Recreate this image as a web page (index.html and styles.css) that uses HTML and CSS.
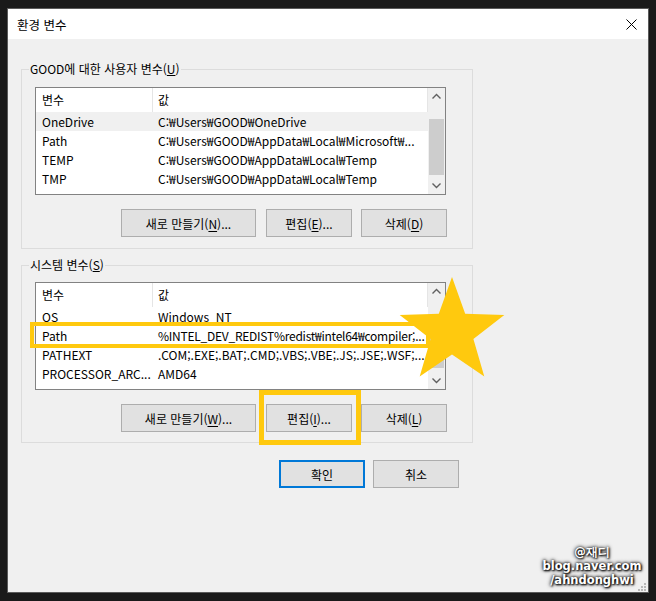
FILE: index.html
```html
<!doctype html>
<html lang="ko">

<head>
    <meta charset="utf-8">
    <title>환경 변수</title>
    <link rel="stylesheet" href="styles.css">
</head>

<body>
    <div class="window">
        <div class="titlebar">
            <span class="title">환경 변수</span>
            <svg class="close" width="11" height="11" viewBox="0 0 11 11">
                <path d="M0.5 0.5 L10.5 10.5 M10.5 0.5 L0.5 10.5" stroke="#000" stroke-width="1" fill="none" />
            </svg>
        </div>

        <div class="content">
            <section class="group">
                <span class="group_label">GOOD에 대한 사용자 변수(<u>U</u>)</span>
                <div class="list">
                    <div class="list_main">
                        <div class="row head"><span class="cell name">변수</span><span class="cell value">값</span></div>
                        <div class="row selected"><span class="cell name">OneDrive</span><span class="cell value">C:₩Users₩GOOD₩OneDrive</span></div>
                        <div class="row"><span class="cell name">Path</span><span class="cell value">C:₩Users₩GOOD₩AppData₩Local₩Microsoft₩...</span></div>
                        <div class="row"><span class="cell name">TEMP</span><span class="cell value">C:₩Users₩GOOD₩AppData₩Local₩Temp</span></div>
                        <div class="row"><span class="cell name">TMP</span><span class="cell value">C:₩Users₩GOOD₩AppData₩Local₩Temp</span></div>
                    </div>
                    <div class="scrollbar">
                        <svg class="arrow" width="17" height="17" viewBox="0 0 17 17"><path d="M4.5 10.5 L8.5 6.5 L12.5 10.5" stroke="#606060" stroke-width="1.4" fill="none" /></svg>
                        <div class="track"><div class="thumb user_thumb"></div></div>
                        <svg class="arrow" width="17" height="17" viewBox="0 0 17 17"><path d="M4.5 6.5 L8.5 10.5 L12.5 6.5" stroke="#606060" stroke-width="1.4" fill="none" /></svg>
                    </div>
                </div>
                <div class="buttons">
                    <button class="btn wide">새로 만들기(<u>N</u>)...</button>
                    <button class="btn">편집(<u>E</u>)...</button>
                    <button class="btn">삭제(<u>D</u>)</button>
                </div>
            </section>

            <section class="group system">
                <span class="group_label">시스템 변수(<u>S</u>)</span>
                <div class="list">
                    <div class="list_main">
                        <div class="row head"><span class="cell name">변수</span><span class="cell value">값</span></div>
                        <div class="row"><span class="cell name">OS</span><span class="cell value">Windows_NT</span></div>
                        <div class="row"><span class="cell name">Path</span><span class="cell value tight">%INTEL_DEV_REDIST%redist₩intel64₩compiler;...</span></div>
                        <div class="row"><span class="cell name">PATHEXT</span><span class="cell value">.COM;.EXE;.BAT;.CMD;.VBS;.VBE;.JS;.JSE;.WSF;...</span></div>
                        <div class="row"><span class="cell name">PROCESSOR_ARC...</span><span class="cell value">AMD64</span></div>
                    </div>
                    <div class="scrollbar">
                        <svg class="arrow" width="17" height="17" viewBox="0 0 17 17"><path d="M4.5 10.5 L8.5 6.5 L12.5 10.5" stroke="#606060" stroke-width="1.4" fill="none" /></svg>
                        <div class="track"><div class="thumb system_thumb"></div></div>
                        <svg class="arrow" width="17" height="17" viewBox="0 0 17 17"><path d="M4.5 6.5 L8.5 10.5 L12.5 6.5" stroke="#606060" stroke-width="1.4" fill="none" /></svg>
                    </div>
                </div>
                <div class="buttons">
                    <button class="btn wide">새로 만들기(<u>W</u>)...</button>
                    <button class="btn">편집(<u>I</u>)...</button>
                    <button class="btn">삭제(<u>L</u>)</button>
                </div>
            </section>

            <div class="dialog_buttons">
                <button class="btn default">확인</button>
                <button class="btn">취소</button>
            </div>
        </div>

        <!-- annotations drawn over the screenshot -->
        <div class="mark mark_path"></div>
        <div class="mark mark_edit"></div>
        <svg class="star" width="110" height="105" viewBox="0 0 110 105">
            <polygon points="55,2 68.2,38.8 107.3,40 76.4,64 87.3,101.5 55,79.5 22.7,101.5 33.6,64 2.7,40 41.8,38.8" fill="#ffc90e" />
        </svg>

        <div class="watermark">
            <div>@재디</div>
            <div>blog.naver.com</div>
            <div>/ahndonghwi</div>
        </div>
        <svg class="grip" width="9" height="9" viewBox="0 0 9 9">
            <rect x="6" y="0" width="2" height="2" fill="#b8b8b8" />
            <rect x="3" y="3" width="2" height="2" fill="#b8b8b8" />
            <rect x="6" y="3" width="2" height="2" fill="#b8b8b8" />
            <rect x="0" y="6" width="2" height="2" fill="#b8b8b8" />
            <rect x="3" y="6" width="2" height="2" fill="#b8b8b8" />
            <rect x="6" y="6" width="2" height="2" fill="#b8b8b8" />
        </svg>
    </div>
</body>

</html>
```

FILE: styles.css
```css
/* Windows "environment variables" dialog */
body {
    margin: 0;
    padding: 8px 0 0 7px;
    height: 601px;
    box-sizing: border-box;
    overflow: hidden;
    background-color: #1a1a1a;
    font-family: "Noto Sans CJK KR", "Noto Sans", sans-serif;
    font-size: 12px;
    color: #000;
}

.window {
    position: relative;
    width: 640px;
    height: 583px;
    background-color: #f0f0f0;
    border: 1px solid #5a5a5a;
}

.titlebar {
    height: 30px;
    background-color: #fff;
    display: flex;
    align-items: center;
    justify-content: space-between;
    padding: 0 11px 0 9px;
}

.title {
    font-size: 12.5px;
}

.content {
    padding: 30px 0 0 13px;
}

.group {
    position: relative;
    width: 437px;
    border: 1px solid #dcdcdc;
    padding: 17px 0 11px 13px;
}

.group.system {
    margin-top: 16px;
    padding-top: 16px;
    padding-bottom: 10px;
}

.group_label {
    position: absolute;
    top: -9px;
    left: 7px;
    padding: 0 1px;
    line-height: 16px;
    background-color: #f0f0f0;
}

.list {
    display: flex;
    width: 409px;
    height: 106px;
    border: 1px solid #828282;
    background-color: #fff;
    overflow: hidden;
}

.list_main {
    flex: 1;
    overflow: hidden;
}

.row {
    display: grid;
    grid-template-columns: 117px 1fr;
    height: 19px;
    line-height: 19px;
    white-space: nowrap;
}

.row.head {
    height: 24px;
    line-height: 23px;
}

.row.selected {
    background-color: #f0f0f0;
}

.cell {
    overflow: hidden;
}

.cell.name {
    padding-left: 6px;
}

.cell.value {
    padding-left: 5px;
}

.cell.tight {
    letter-spacing: -0.25px;
}

.head .cell {
    border-right: 1px solid #e5e5e5;
}

.scrollbar {
    width: 17px;
    display: flex;
    flex-direction: column;
    background-color: #f0f0f0;
}

.arrow {
    display: block;
    flex: none;
}

.track {
    flex: 1;
    position: relative;
}

.thumb {
    margin: 0 1px;
    background-color: #cdcdcd;
}

.user_thumb {
    margin-top: 14px;
    height: 56px;
}

.system_thumb {
    margin-top: 28px;
    height: 40px;
}

.buttons {
    display: flex;
    justify-content: flex-end;
    gap: 9px;
    margin-top: 14px;
    width: 412px;
}

.btn {
    font-family: inherit;
    font-size: 12px;
    color: #000;
    width: 86px;
    height: 28px;
    padding: 0;
    background-color: #e1e1e1;
    border: 1px solid #adadad;
}

.btn.wide {
    width: 135px;
    margin-right: 1px;
}

.btn u {
    text-underline-offset: 2px;
}

.dialog_buttons {
    display: flex;
    justify-content: flex-end;
    gap: 8px;
    width: 438px;
    margin-top: 17px;
}

.btn.default {
    border: 2px solid #0078d7;
}

.mark {
    position: absolute;
    border: 4px solid #ffc90e;
}

.mark_path {
    left: 22px;
    top: 313px;
    width: 392px;
    height: 18px;
}

.mark_edit {
    left: 251px;
    top: 381px;
    width: 92px;
    height: 45px;
    border-width: 5px;
}

.star {
    position: absolute;
    left: 389px;
    top: 266px;
}

.watermark {
    position: absolute;
    left: 534px;
    top: 536px;
    width: 100px;
    text-align: center;
    font-family: "DejaVu Sans", sans-serif;
    font-weight: bold;
    font-size: 11.5px;
    line-height: 14px;
    color: #fff;
    text-shadow: 1px 1px 2px #000, 0 0 3px #000, 0 0 4px #333;
}

.grip {
    position: absolute;
    left: 630px;
    top: 574px;
}
```
